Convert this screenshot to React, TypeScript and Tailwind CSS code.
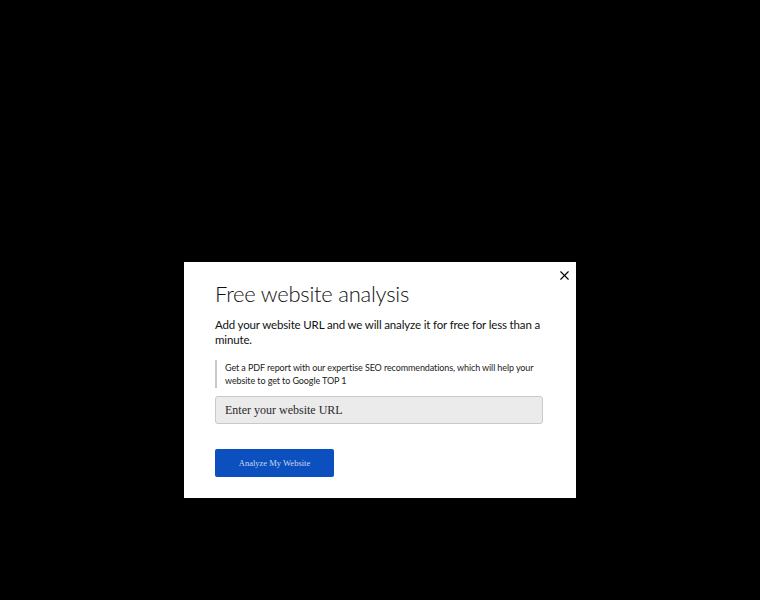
import { X } from 'lucide-react'

export default function App() {
  return (
    <div className="w-[760px] h-[600px] bg-black pt-[262px] overflow-hidden">
      <div className="relative ml-[184px] w-[392px] h-[236px] bg-white pl-[31px] pr-[30px] pt-[18px] font-['Lato',sans-serif]">
        <button className="absolute right-[2px] top-[4px] text-black p-[2px]">
          <X size={15} strokeWidth={1.8} />
        </button>

        <h2 className="text-[22px] leading-[28px] text-[#111] font-light tracking-[-0.25px]">
          Free website analysis
        </h2>

        <p className="mt-[9px] text-[11.5px] leading-[15px] text-[#111] tracking-[-0.15px]">
          Add your website URL and we will analyze it for free for less than a minute.
        </p>

        <div className="mt-[13px] border-l-2 border-[#c8c8c8] pl-[8px] text-[9px] leading-[13px] text-[#222] py-[1px] tracking-[-0.1px]">
          Get a PDF report with our expertise SEO recommendations, which will help your website to get to Google TOP 1
        </div>

        <input
          placeholder="Enter your website URL"
          className="mt-[8px] block w-[328px] h-[28px] rounded-[3px] border border-[#c9c9c9] bg-[#ebebeb] px-[9px] text-[12px] font-['Liberation_Serif',serif] placeholder:text-[#2a2a2a] outline-none"
        />

        <button className="mt-[25px] w-[119px] h-[28px] rounded-[2px] bg-[#0b50be] text-[#c9d8f2] text-[8.5px] font-['Liberation_Serif',serif]">
          Analyze My Website
        </button>
      </div>
    </div>
  )
}
